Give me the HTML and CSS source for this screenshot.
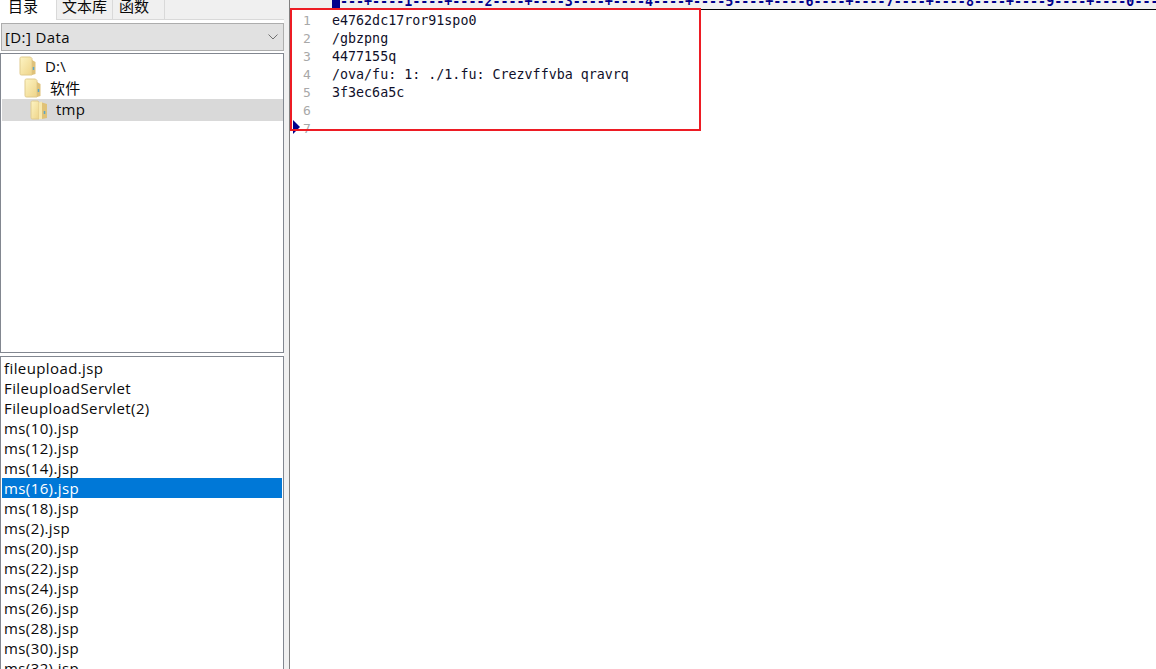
FILE: index.html
```html
<!DOCTYPE html>
<html lang="zh">
<head>
<meta charset="utf-8">
<title>UltraEdit</title>
<link rel="stylesheet" href="styles.css">
</head>
<body>
<svg class="defs" width="0" height="0">
  <defs>
    <linearGradient id="fg" x1="0" y1="0" x2="1" y2="1">
      <stop offset="0" stop-color="#fdf4c4"/>
      <stop offset="1" stop-color="#eed488"/>
    </linearGradient>
  </defs>
</svg>
<div class="app">
  <aside class="side">
    <div class="tabs">
      <div class="tab active">目录</div>
      <div class="tab t2">文本库</div>
      <div class="tab t3">函数</div>
    </div>
    <div class="combo">
      <span>[D:] Data</span>
      <svg class="chev" width="10" height="6" viewBox="0 0 10 6"><path d="M.5 .5l4.500 4.500 4.500-4.500" fill="none" stroke="#707070" stroke-width="1"/></svg>
    </div>
    <div class="tree">
      <div class="node n0">
        <svg class="folder" width="18" height="20" viewBox="0 0 18 20"><path d="M1 2.500C1 1.500 1.500 1 2.500 1H11.500L13 2.500V19H2.500C1.500 19 1 18.500 1 17.500Z" fill="url(#fg)" stroke="#e0cb8e"/><path d="M13 4L16.500 6V18L13 19Z" fill="#dfc27a"/><path d="M14.500 11v3" stroke="#5aa6c8" stroke-width="1.500"/></svg>
        <span>D:\</span>
      </div>
      <div class="node n1">
        <svg class="folder" width="18" height="20" viewBox="0 0 18 20"><path d="M1 2.500C1 1.500 1.500 1 2.500 1H11.500L13 2.500V19H2.500C1.500 19 1 18.500 1 17.500Z" fill="url(#fg)" stroke="#e0cb8e"/><path d="M13 4L16.500 6V18L13 19Z" fill="#dfc27a"/><path d="M14.500 11v3" stroke="#5aa6c8" stroke-width="1.500"/></svg>
        <span>软件</span>
      </div>
      <div class="node n2 sel">
        <svg class="folder" width="18" height="20" viewBox="0 0 18 20"><path d="M1 2.500C1 1.500 1.500 1 2.500 1H8L9 2.500V19H2.500C1.500 19 1 18.500 1 17.500Z" fill="url(#fg)" stroke="#e0cb8e"/><path d="M9 2.500L12 1.500V19H9Z" fill="#f8e9ae"/><path d="M12 2.500L17 4V18L12 19Z" fill="#e0c277"/><path d="M14.500 11v3" stroke="#5aa6c8" stroke-width="1.500"/></svg>
        <span>tmp</span>
      </div>
    </div>
    <ul class="files">
      <li>fileupload.jsp</li>
      <li>FileuploadServlet</li>
      <li>FileuploadServlet(2)</li>
      <li>ms(10).jsp</li>
      <li>ms(12).jsp</li>
      <li>ms(14).jsp</li>
      <li class="cur">ms(16).jsp</li>
      <li>ms(18).jsp</li>
      <li>ms(2).jsp</li>
      <li>ms(20).jsp</li>
      <li>ms(22).jsp</li>
      <li>ms(24).jsp</li>
      <li>ms(26).jsp</li>
      <li>ms(28).jsp</li>
      <li>ms(30).jsp</li>
      <li>ms(32).jsp</li>
    </ul>
  </aside>
  <main class="editor">
    <div class="ruler"><i class="caret"></i><span class="marks">---+----1----+----2----+----3----+----4----+----5----+----6----+----7----+----8----+----9----+----0----+</span></div>
    <div class="lines">
      <div class="line"><b>1</b><code>e4762dc17ror91spo0</code></div>
      <div class="line"><b>2</b><code>/gbzpng</code></div>
      <div class="line"><b>3</b><code>4477155q</code></div>
      <div class="line"><b>4</b><code>/ova/fu: 1: ./1.fu: Crezvffvba qravrq</code></div>
      <div class="line"><b>5</b><code>3f3ec6a5c</code></div>
      <div class="line"><b>6</b><code></code></div>
      <div class="line"><b>7</b><code></code></div>
    </div>
    <div class="marker"></div>
    <div class="redbox"></div>
  </main>
</div>
</body>
</html>
```
FILE: styles.css
```css
html, body {
  margin: 0;
  padding: 0;
  height: 100%;
  overflow: hidden;
  background: #fff;
}
.defs { position: absolute; }
.app {
  display: flex;
  height: 669px;
  font-family: "Open Sans", "Noto Sans CJK SC", sans-serif;
  font-size: 15px;
  letter-spacing: 0.4px;
  color: #0a0a0a;
}
.side {
  width: 284px;
  flex: none;
  height: 669px;
  overflow: hidden;
  display: flex;
  flex-direction: column;
  background: #fff;
}
.tabs {
  height: 19px;
  flex: none;
  display: flex;
  background: #f0f0f0;
  border-bottom: 1px solid #d9d9d9;
  letter-spacing: 0;
}
.tab {
  height: 19px;
  line-height: 12px;
  padding: 0 0 0 8px;
  box-sizing: border-box;
  border-right: 1px solid #d9d9d9;
  overflow: hidden;
}
.tab.active { width: 57px; background: #fff; height: 20px; }
.tab.t2 { width: 56px; padding-left: 5px; }
.tab.t3 { width: 52px; padding-left: 6px; }
.combo {
  margin: 3px 0 2px 1px;
  width: 283px;
  height: 28px;
  flex: none;
  box-sizing: border-box;
  border: 1px solid #adadad;
  background: #e1e1e1;
  display: flex;
  align-items: center;
  justify-content: space-between;
  padding: 0 5px 0 3px;
}
.tree {
  height: 300px;
  flex: none;
  box-sizing: border-box;
  width: 284px;
  margin-bottom: 3px;
  border: 1px solid #828790;
  background: #fff;
  padding-top: 1px;
  letter-spacing: 0.2px;
}
.node {
  height: 22px;
  display: flex;
  align-items: center;
  gap: 8px;
}
.n0 { padding-left: 18px; }
.n1 { padding-left: 23px; }
.n2 { padding-left: 29px; }
.n1 span, .n2 span { margin-top: -2px; }
.sel { background: #d9d9d9; margin-left: 1px; padding-left: 28px; }
.folder { flex: none; }
.files {
  list-style: none;
  margin: 0;
  padding: 1px 0 0 1px;
  width: 284px;
  box-sizing: border-box;
  flex: 1;
  border: 1px solid #828790;
  border-bottom: 0;
  background: #fff;
  overflow: hidden;
}
.files li {
  height: 20px;
  line-height: 20px;
  padding-left: 2px;
  margin-right: 1px;
  white-space: nowrap;
}
.files li.cur { background: #0078d7; color: #fff; }
.editor {
  flex: 1;
  min-width: 0;
  position: relative;
  background: #fff;
  border-left: 5px solid #f0f0f0;
  box-shadow: inset 1px 0 0 #808080;
  overflow: hidden;
  letter-spacing: 0;
  font-family: "DejaVu Sans Mono", monospace;
}
.ruler {
  height: 9px;
  margin-left: 1px;
  padding-left: 42px;
  background: #f0f0f0;
  border-bottom: 1px solid #000;
  display: flex;
  overflow: hidden;
  line-height: 8px;
  color: #00008b;
  font-size: 13.33px;
  font-weight: bold;
  white-space: nowrap;
}
.caret { width: 8px; height: 8px; flex: none; background: #00008b; }
.marks { margin-top: -2px; }
.lines { margin-left: 1px; padding-top: 2px; }
.line {
  height: 18px;
  line-height: 18px;
  display: flex;
  font-size: 13.33px;
  color: #10102a;
}
.line b {
  width: 42px;
  flex: none;
  box-sizing: border-box;
  padding-left: 13px;
  font-weight: normal;
  color: #a8a8a8;
  font-size: 13px;
}
.line code { font: inherit; white-space: pre; }
.marker {
  position: absolute;
  left: 4px;
  top: 120px;
  width: 0;
  height: 0;
  border-left: 7px solid #00008b;
  border-top: 7px solid transparent;
  border-bottom: 7px solid transparent;
}
.redbox {
  position: absolute;
  left: 1px;
  top: 8px;
  width: 411px;
  height: 123px;
  box-sizing: border-box;
  border: 2px solid #ed1c24;
}
```
